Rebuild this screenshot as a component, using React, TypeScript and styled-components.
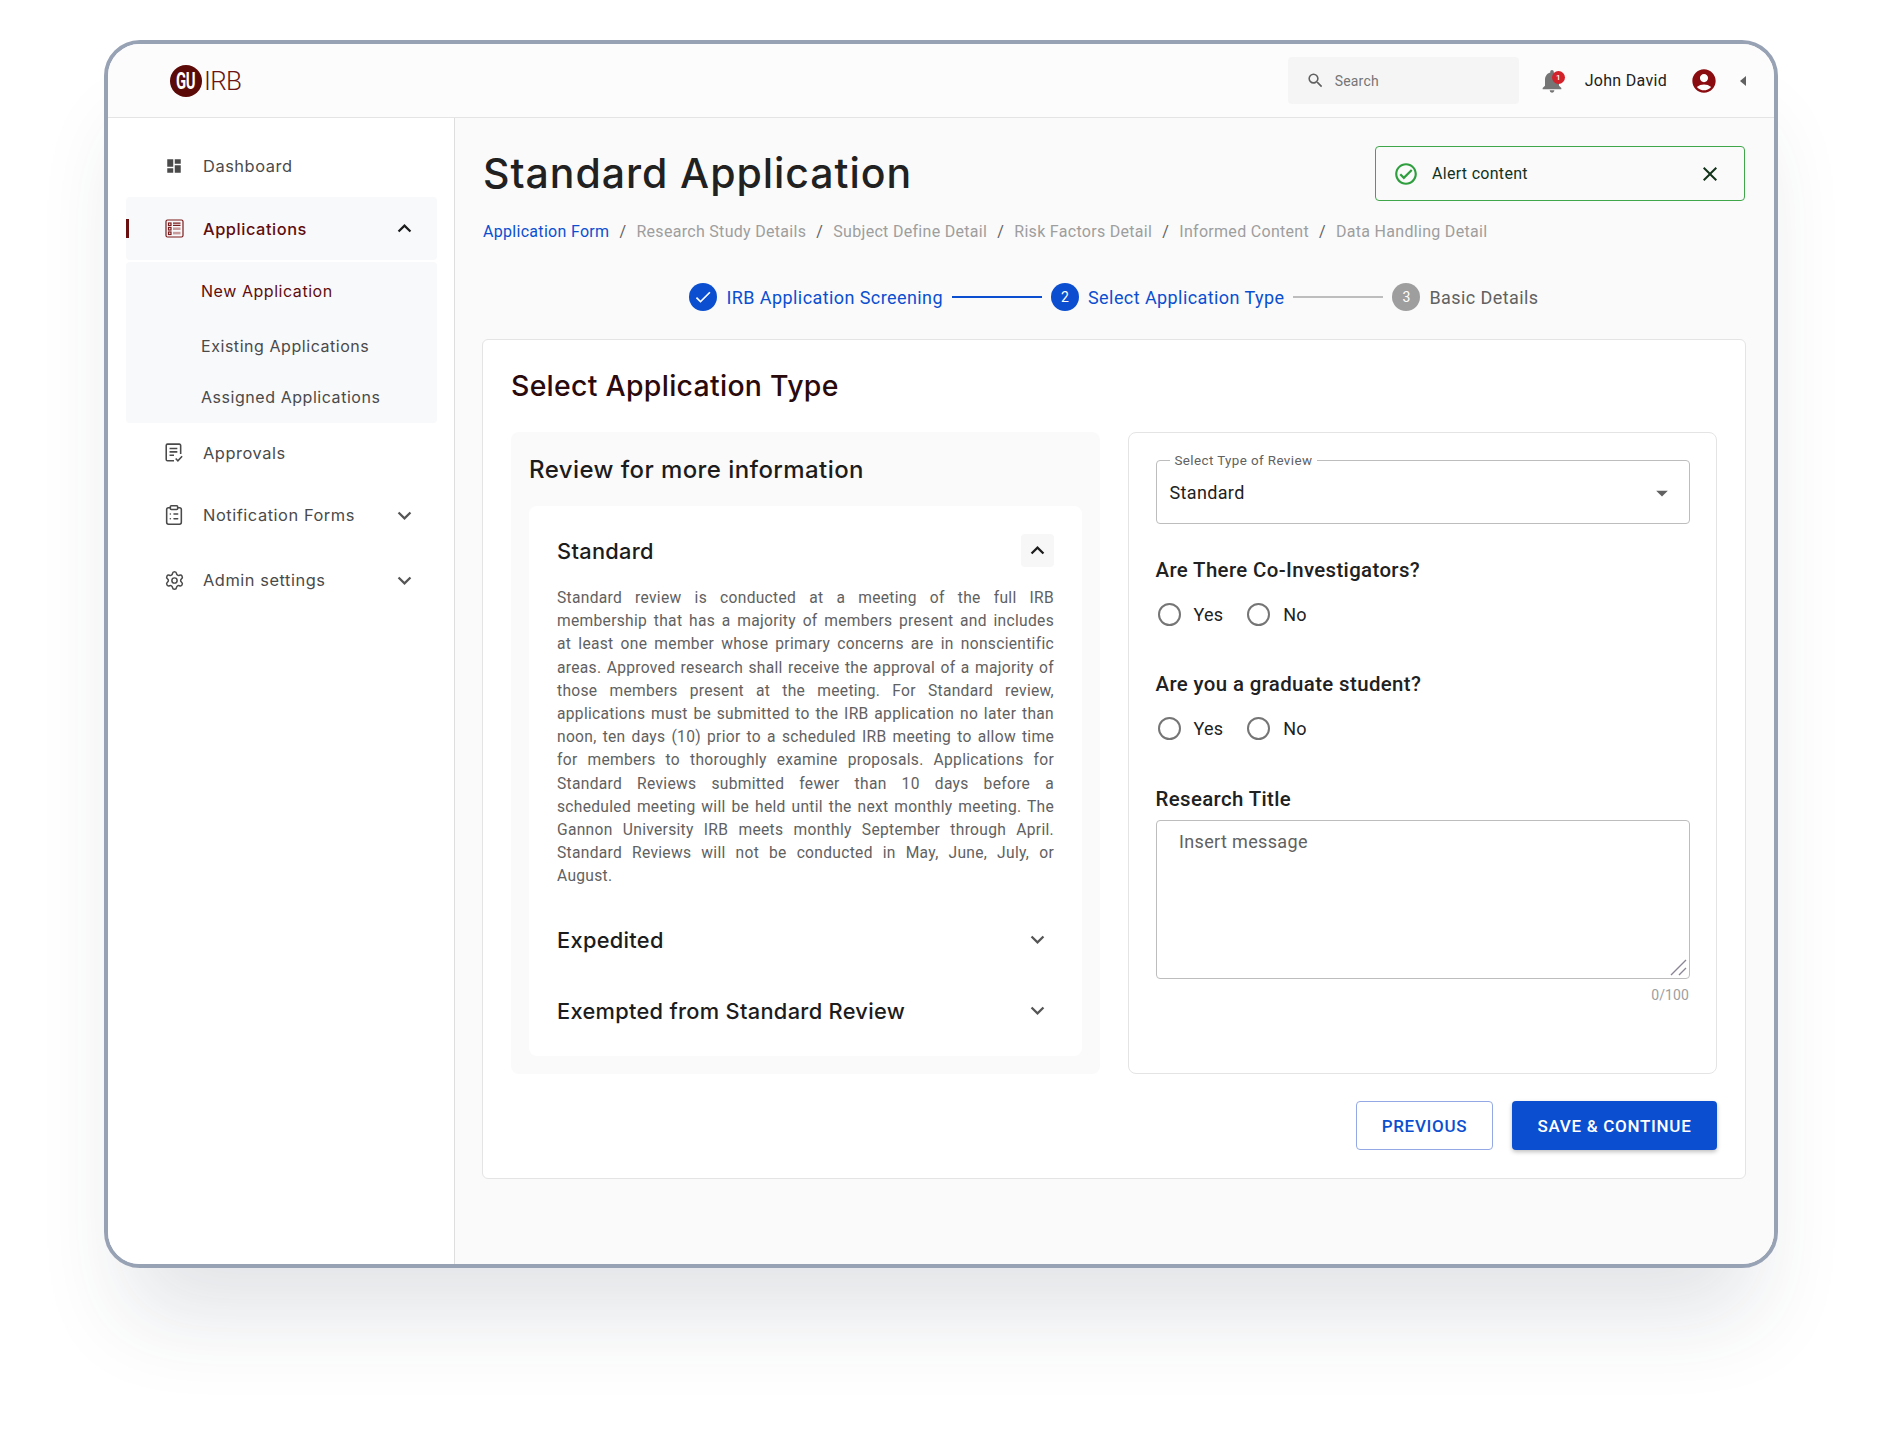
import React from 'react';
import styled, { createGlobalStyle } from 'styled-components';
import {
  MdAccountCircle,
  MdArrowDropDown,
  MdCheck,
  MdClose,
  MdDashboard,
  MdExpandLess,
  MdExpandMore,
  MdNotifications,
  MdOutlineCheckCircle,
  MdSearch,
} from 'react-icons/md';
import { ClipboardList, Settings } from 'lucide-react';

const MAROON = '#5f0d0d';
const BLUE = '#0b4fd0';
const HEADING_FONT = '"Inter", "Noto Sans", sans-serif';

const GlobalStyle = createGlobalStyle`
  html, body {
    margin: 0;
    background: #fff;
    font-family: "Roboto", "Liberation Sans", sans-serif;
    overflow: hidden;
  }
  * { box-sizing: border-box; }
`;

const Page = styled.div`
  height: 1436px;
  padding: 40px 0 0 104px;
`;

const Frame = styled.div`
  width: 1674px;
  height: 1228px;
  border: 4px solid #98a2b5;
  border-radius: 36px;
  background: #fff;
  box-shadow: 0 70px 90px -25px rgba(45, 55, 75, 0.14);
  overflow: hidden;
  display: flex;
  flex-direction: column;
`;

/* top bar */
const TopBar = styled.header`
  height: 74px;
  flex: none;
  background: #fcfcfc;
  border-bottom: 1.5px solid #e4e4e4;
  display: flex;
  align-items: center;
  padding: 0 28px 0 62px;
`;

const Logo = styled.div`
  display: flex;
  align-items: center;
`;

const LogoMark = styled.div`
  width: 32px;
  height: 32px;
  border-radius: 50%;
  background: #5c0a08;
  color: #fff;
  display: flex;
  align-items: center;
  justify-content: center;
  font-size: 24px;
  font-weight: 700;
  letter-spacing: -0.5px;

  & > span {
    display: block;
    transform: scaleX(0.62);
  }
`;

const LogoText = styled.span`
  margin-left: 2px;
  color: #6d1512;
  font-size: 26px;
  font-weight: 300;
  letter-spacing: -0.7px;
`;

const SearchBox = styled.div`
  margin-left: auto;
  width: 231px;
  height: 47px;
  background: #f5f5f5;
  border-radius: 4px;
  display: flex;
  align-items: center;
  gap: 10px;
  padding-left: 18px;
  font-size: 14px;
  letter-spacing: 0.2px;
  color: #757575;

  & > svg {
    color: #616161;
  }
`;

const Bell = styled.div`
  position: relative;
  margin-left: 19px;
  width: 28px;
  height: 28px;
  color: #757575;
  font-size: 28px;
  line-height: 0;
`;

const BellBadge = styled.span`
  position: absolute;
  top: 4px;
  left: 14px;
  width: 13px;
  height: 13px;
  border-radius: 50%;
  background: #d3222a;
  color: #fff;
  font-size: 8px;
  font-weight: 500;
  line-height: 13px;
  text-align: center;
`;

const UserName = styled.span`
  margin-left: 19px;
  font-size: 16px;
  letter-spacing: 0.3px;
  color: #212121;
`;

const Avatar = styled.div`
  margin-left: 23px;
  color: #8b0c10;
  font-size: 28px;
  line-height: 0;
`;

const CollapseArrow = styled.div`
  margin-left: 22px;
  width: 0;
  height: 0;
  border-top: 5px solid transparent;
  border-bottom: 5px solid transparent;
  border-right: 6px solid #616161;
`;

/* sidebar */
const Body = styled.div`
  flex: 1;
  display: flex;
  min-height: 0;
`;

const Sidebar = styled.nav`
  width: 347px;
  flex: none;
  background: #fff;
  border-right: 1px solid #dedede;
  padding: 17px 18px 0;
`;

const NavRow = styled.div<{ $active?: boolean; $h?: number; $top?: number }>`
  position: relative;
  height: ${({ $h }) => $h ?? 62}px;
  margin-top: ${({ $top }) => $top ?? 0}px;
  width: 311px;
  display: flex;
  align-items: center;
  padding: 0 19.5px 0 36px;
  border-radius: 4px;
  background: ${({ $active }) => ($active ? '#f8f9fb' : 'transparent')};
  color: ${({ $active }) => ($active ? MAROON : '#4a4a4a')};
`;

const ActiveMarker = styled.span`
  position: absolute;
  left: 0;
  top: 22px;
  width: 3px;
  height: 19px;
  background: #6a0f0f;
`;

const NavIcon = styled.span`
  width: 24px;
  height: 24px;
  display: flex;
  align-items: center;
  justify-content: center;
  flex: none;
`;

const NavLabel = styled.span<{ $strong?: boolean }>`
  margin-left: 17px;
  font-family: ${HEADING_FONT};
  font-size: 16.4px;
  font-weight: ${({ $strong }) => ($strong ? 500 : 400)};
  letter-spacing: 0.55px;
`;

const NavChevron = styled.span<{ $dark?: boolean }>`
  margin-left: auto;
  font-size: 27px;
  line-height: 0;
  color: ${({ $dark }) => ($dark ? '#1c1c1c' : '#555')};
`;

const SubPanel = styled.div`
  margin-top: 2px;
  width: 311px;
  height: 161px;
  border-radius: 4px;
  background: #f8f9fb;
  padding-left: 75px;
`;

const SubItem = styled.div<{ $active?: boolean; $h: number }>`
  height: ${({ $h }) => $h}px;
  display: flex;
  align-items: center;
  font-family: ${HEADING_FONT};
  font-size: 16px;
  letter-spacing: 0.55px;
  color: ${({ $active }) => ($active ? MAROON : '#4a4a4a')};
`;

/* main column */
const Main = styled.main`
  flex: 1;
  background: #fafafa;
  padding: 0 28px 0 27px;
`;

const TitleRow = styled.div`
  padding-top: 28px;
  display: flex;
  align-items: center;
  justify-content: space-between;
`;

const PageTitle = styled.h1`
  margin: 0;
  padding: 0 0 2px 1px;
  font-family: ${HEADING_FONT};
  font-size: 41px;
  font-weight: 500;
  letter-spacing: 0.95px;
  color: #212121;
`;

const Alert = styled.div`
  width: 370px;
  height: 55px;
  margin-right: 1px;
  border: 1.5px solid #3fa64a;
  border-radius: 4px;
  display: flex;
  align-items: center;
  padding: 0 22px 0 17px;
  color: #12331a;
  font-size: 16px;
  letter-spacing: 0.3px;
`;

const AlertIcon = styled.span`
  margin-right: 13px;
  font-size: 26px;
  line-height: 0;
  color: #2e9e3e;
`;

const AlertClose = styled.span`
  margin-left: auto;
  font-size: 24px;
  line-height: 0;
`;

const Breadcrumbs = styled.div`
  margin-top: 20px;
  height: 20px;
  padding-left: 1px;
  display: flex;
  align-items: center;
  font-size: 16px;
  letter-spacing: 0.3px;
  color: #9e9e9e;
`;

const Crumb = styled.span<{ $current?: boolean }>`
  color: ${({ $current }) => ($current ? BLUE : '#9e9e9e')};
`;

const CrumbSep = styled.span`
  width: 27px;
  text-align: center;
  color: #616161;
`;

const Stepper = styled.div`
  margin-top: 42px;
  height: 28px;
  display: flex;
  align-items: center;
  justify-content: center;
`;

const StepDot = styled.span<{ $done?: boolean }>`
  width: 28px;
  height: 28px;
  border-radius: 50%;
  flex: none;
  background: ${({ $done }) => ($done ? BLUE : '#9e9e9e')};
  color: #fff;
  display: flex;
  align-items: center;
  justify-content: center;
  font-size: 14px;
`;

const StepText = styled.span<{ $done?: boolean }>`
  margin-left: 9px;
  font-size: 18px;
  letter-spacing: 0.42px;
  color: ${({ $done }) => ($done ? BLUE : '#616161')};
`;

const StepLine = styled.span<{ $done?: boolean }>`
  width: 90px;
  height: 1.5px;
  margin: 0 9px;
  background: ${({ $done }) => ($done ? BLUE : '#bdbdbd')};
`;

const Card = styled.section`
  margin-top: 28px;
  height: 840px;
  background: #fff;
  border: 1.5px solid #e4e4e4;
  border-radius: 6px;
  padding: 26px 28px 0;
`;

const CardTitle = styled.h2`
  margin: 0;
  height: 40px;
  line-height: 40px;
  font-family: ${HEADING_FONT};
  font-size: 28.4px;
  font-weight: 500;
  letter-spacing: 0.3px;
  color: #2a0a0a;
`;

const Columns = styled.div`
  margin-top: 26px;
  display: grid;
  grid-template-columns: 589px 589px;
  gap: 28px;
`;

/* accordion column */
const InfoPanel = styled.div`
  height: 642px;
  background: #fafafa;
  border-radius: 8px;
  padding: 20px 18px 18px;
`;

const InfoTitle = styled.h3`
  margin: 0 0 18px;
  height: 36px;
  line-height: 36px;
  font-family: ${HEADING_FONT};
  font-size: 24px;
  font-weight: 500;
  letter-spacing: 0.42px;
  color: #1c1c1c;
`;

const Accordion = styled.div`
  height: 550px;
  background: #fff;
  border-radius: 8px;
  padding: 28px 28px 0;
`;

const AccordionHead = styled.div<{ $top?: number; $h?: number }>`
  height: ${({ $h }) => $h ?? 40}px;
  margin-top: ${({ $top }) => $top ?? 0}px;
  display: flex;
  align-items: center;
  justify-content: space-between;
  font-family: ${HEADING_FONT};
  font-size: 21.8px;
  font-weight: 500;
  letter-spacing: 0.3px;
  color: #1c1c1c;
`;

const ChevronBox = styled.span<{ $filled?: boolean }>`
  width: 33px;
  height: 33px;
  border-radius: 4px;
  background: ${({ $filled }) => ($filled ? '#f7f7f7' : 'transparent')};
  color: ${({ $filled }) => ($filled ? '#1c1c1c' : '#555')};
  display: flex;
  align-items: center;
  justify-content: center;
  font-size: 27px;
`;

const Paragraph = styled.div`
  margin-top: 20px;
  font-size: 15.6px;
  line-height: 23.2px;
  letter-spacing: 0.3px;
  color: #616161;
`;

const ParagraphLine = styled.div<{ $last?: boolean }>`
  white-space: nowrap;
  text-align: justify;
  text-align-last: ${({ $last }) => ($last ? 'left' : 'justify')};
`;

/* form column */
const FormPanel = styled.div`
  height: 642px;
  background: #fff;
  border: 1.5px solid #e4e4e4;
  border-radius: 8px;
  padding: 27px 26px 0 26.5px;
`;

const SelectBox = styled.div`
  position: relative;
  height: 64px;
  border: 1.5px solid #bdbdbd;
  border-radius: 4px;
  display: flex;
  align-items: center;
  justify-content: space-between;
  padding: 1px 13px 0 13px;
  font-size: 18px;
  letter-spacing: 0.35px;
  color: #212121;
`;

const SelectLegend = styled.span`
  position: absolute;
  top: -8px;
  left: 13px;
  padding: 0 5px;
  background: #fff;
  font-size: 13.4px;
  line-height: 16px;
  letter-spacing: 0.4px;
  color: #616161;
`;

const SelectArrow = styled.span`
  font-size: 28px;
  line-height: 0;
  color: #616161;
`;

const Question = styled.div<{ $top: number }>`
  margin-top: ${({ $top }) => $top}px;
  height: 24px;
  line-height: 24px;
  font-size: 20.4px;
  font-weight: 500;
  letter-spacing: 0.38px;
  color: #212121;
`;

const RadioRow = styled.div`
  margin-top: 20px;
  height: 24px;
  padding-left: 2px;
  display: flex;
  align-items: center;
  gap: 24px;
`;

const RadioOption = styled.label`
  display: flex;
  align-items: center;
  gap: 13px;
  font-size: 18px;
  letter-spacing: 0.2px;
  color: #212121;
`;

const RadioCircle = styled.span`
  width: 23px;
  height: 23px;
  border-radius: 50%;
  border: 2px solid #757575;
`;

const FieldWrap = styled.div`
  position: relative;
  margin-top: 9px;
`;

const TitleField = styled.textarea`
  display: block;
  width: 100%;
  height: 159px;
  padding: 9px 22.5px;
  border: 1.5px solid #bdbdbd;
  border-radius: 4px;
  background: #fff;
  outline: none;
  resize: none;
  font-family: inherit;
  font-size: 18px;
  line-height: 24px;
  letter-spacing: 0.35px;

  &::placeholder {
    color: #616161;
    opacity: 1;
  }
`;

const ResizeGrip = styled.svg`
  position: absolute;
  right: 3px;
  bottom: 3px;
  width: 17px;
  height: 17px;
`;

const Counter = styled.div`
  margin-top: 8px;
  padding-right: 1px;
  height: 16px;
  line-height: 16px;
  text-align: right;
  font-size: 14px;
  letter-spacing: 0.1px;
  color: #9e9e9e;
`;

const Actions = styled.div`
  margin-top: 27px;
  display: flex;
  justify-content: flex-end;
  gap: 19px;
`;

const Button = styled.button<{ $primary?: boolean }>`
  height: 49px;
  padding: 0;
  width: ${({ $primary }) => ($primary ? 205 : 137)}px;
  border-radius: 4px;
  border: ${({ $primary }) => ($primary ? 'none' : '1.5px solid #94a8e6')};
  background: ${({ $primary }) => ($primary ? BLUE : '#fff')};
  color: ${({ $primary }) => ($primary ? '#fff' : BLUE)};
  box-shadow: ${({ $primary }) => ($primary ? '0 2px 4px rgba(0, 0, 0, 0.25)' : 'none')};
  font-family: inherit;
  font-size: 17px;
  font-weight: 500;
  letter-spacing: 0.7px;
`;

function ApplicationsIcon() {
  return (
    <svg width="19" height="19" viewBox="0 0 19 19" fill="none" stroke="#7a1a1a" strokeWidth="1.2">
      <rect x="1" y="1" width="17" height="17" rx="1.5" />
      <rect x="3.5" y="4" width="2.5" height="2.5" />
      <path d="M8 4.2h7.5M8 6.4h7.5" />
      <rect x="3.5" y="8.5" width="2.5" height="2.5" />
      <rect x="8" y="8.4" width="7.5" height="2.6" fill="#c79b9b" stroke="none" />
      <rect x="3.5" y="13" width="2.5" height="2.5" />
      <rect x="8" y="12.8" width="7.5" height="2.6" fill="#c79b9b" stroke="none" />
    </svg>
  );
}

function ApprovalsIcon() {
  return (
    <svg width="20" height="20" viewBox="0 0 18 18" fill="none" stroke="#4a4a4a" strokeWidth="1.4">
      <path d="M9 16H3.2A1.2 1.2 0 0 1 2 14.8V2.2A1.2 1.2 0 0 1 3.2 1h10.6A1.2 1.2 0 0 1 15 2.2V10" />
      <path d="M5 5h7M5 8h7M5 11h4" />
      <path d="M10.5 14l2 2 3.8-4" />
    </svg>
  );
}

const paragraphLines = [
  'Standard review is conducted at a meeting of the full IRB',
  'membership that has a majority of members present and includes',
  'at least one member whose primary concerns are in nonscientific',
  'areas. Approved research shall receive the approval of a majority of',
  'those members present at the meeting. For Standard review,',
  'applications must be submitted to the IRB application no later than',
  'noon, ten days (10) prior to a scheduled IRB meeting to allow time',
  'for members to thoroughly examine proposals. Applications for',
  'Standard Reviews submitted fewer than 10 days before a',
  'scheduled meeting will be held until the next monthly meeting. The',
  'Gannon University IRB meets monthly September through April.',
  'Standard Reviews will not be conducted in May, June, July, or',
  'August.',
];

const crumbs = [
  'Research Study Details',
  'Subject Define Detail',
  'Risk Factors Detail',
  'Informed Content',
  'Data Handling Detail',
];

function YesNo() {
  return (
    <RadioRow>
      <RadioOption>
        <RadioCircle />
        Yes
      </RadioOption>
      <RadioOption>
        <RadioCircle />
        No
      </RadioOption>
    </RadioRow>
  );
}

export default function App() {
  return (
    <Page>
      <GlobalStyle />
      <Frame>
        <TopBar>
          <Logo>
            <LogoMark>
              <span>GU</span>
            </LogoMark>
            <LogoText>IRB</LogoText>
          </Logo>
          <SearchBox>
            <MdSearch size={19} />
            Search
          </SearchBox>
          <Bell>
            <MdNotifications />
            <BellBadge>1</BellBadge>
          </Bell>
          <UserName>John David</UserName>
          <Avatar>
            <MdAccountCircle />
          </Avatar>
          <CollapseArrow />
        </TopBar>

        <Body>
          <Sidebar>
            <NavRow>
              <NavIcon>
                <MdDashboard size={18} />
              </NavIcon>
              <NavLabel>Dashboard</NavLabel>
            </NavRow>
            <NavRow $active $h={63}>
              <ActiveMarker />
              <NavIcon>
                <ApplicationsIcon />
              </NavIcon>
              <NavLabel $strong>Applications</NavLabel>
              <NavChevron $dark>
                <MdExpandLess />
              </NavChevron>
            </NavRow>
            <SubPanel>
              <SubItem $active $h={57}>
                New Application
              </SubItem>
              <SubItem $h={53}>Existing Applications</SubItem>
              <SubItem $h={50}>Assigned Applications</SubItem>
            </SubPanel>
            <NavRow $h={60}>
              <NavIcon>
                <ApprovalsIcon />
              </NavIcon>
              <NavLabel>Approvals</NavLabel>
            </NavRow>
            <NavRow $top={1}>
              <NavIcon>
                <ClipboardList size={22} strokeWidth={1.7} />
              </NavIcon>
              <NavLabel>Notification Forms</NavLabel>
              <NavChevron>
                <MdExpandMore />
              </NavChevron>
            </NavRow>
            <NavRow $top={3}>
              <NavIcon>
                <Settings size={21} strokeWidth={1.7} />
              </NavIcon>
              <NavLabel>Admin settings</NavLabel>
              <NavChevron>
                <MdExpandMore />
              </NavChevron>
            </NavRow>
          </Sidebar>

          <Main>
            <TitleRow>
              <PageTitle>Standard Application</PageTitle>
              <Alert>
                <AlertIcon>
                  <MdOutlineCheckCircle />
                </AlertIcon>
                Alert content
                <AlertClose>
                  <MdClose />
                </AlertClose>
              </Alert>
            </TitleRow>

            <Breadcrumbs>
              <Crumb $current>Application Form</Crumb>
              {crumbs.map((crumb) => (
                <React.Fragment key={crumb}>
                  <CrumbSep>/</CrumbSep>
                  <Crumb>{crumb}</Crumb>
                </React.Fragment>
              ))}
            </Breadcrumbs>

            <Stepper>
              <StepDot $done>
                <MdCheck size={20} />
              </StepDot>
              <StepText $done>IRB Application Screening</StepText>
              <StepLine $done />
              <StepDot $done>2</StepDot>
              <StepText $done>Select Application Type</StepText>
              <StepLine />
              <StepDot>3</StepDot>
              <StepText>Basic Details</StepText>
            </Stepper>

            <Card>
              <CardTitle>Select Application Type</CardTitle>
              <Columns>
                <InfoPanel>
                  <InfoTitle>Review for more information</InfoTitle>
                  <Accordion>
                    <AccordionHead $h={33}>
                      Standard
                      <ChevronBox $filled>
                        <MdExpandLess />
                      </ChevronBox>
                    </AccordionHead>
                    <Paragraph>
                      {paragraphLines.map((line, i) => (
                        <ParagraphLine key={line} $last={i === paragraphLines.length - 1}>
                          {line}
                        </ParagraphLine>
                      ))}
                    </Paragraph>
                    <AccordionHead $top={31}>
                      Expedited
                      <ChevronBox>
                        <MdExpandMore />
                      </ChevronBox>
                    </AccordionHead>
                    <AccordionHead $top={31}>
                      Exempted from Standard Review
                      <ChevronBox>
                        <MdExpandMore />
                      </ChevronBox>
                    </AccordionHead>
                  </Accordion>
                </InfoPanel>

                <FormPanel>
                  <SelectBox>
                    <SelectLegend>Select Type of Review</SelectLegend>
                    Standard
                    <SelectArrow>
                      <MdArrowDropDown />
                    </SelectArrow>
                  </SelectBox>
                  <Question $top={34}>Are There Co-Investigators?</Question>
                  <YesNo />
                  <Question $top={46}>Are you a graduate student?</Question>
                  <YesNo />
                  <Question $top={47}>Research Title</Question>
                  <FieldWrap>
                    <TitleField placeholder="Insert message" />
                    <ResizeGrip viewBox="0 0 17 17" fill="none" stroke="#8a8494" strokeWidth="1.4">
                      <path d="M1 16L16 1M9 16l7-7" />
                    </ResizeGrip>
                  </FieldWrap>
                  <Counter>0/100</Counter>
                </FormPanel>
              </Columns>
              <Actions>
                <Button>PREVIOUS</Button>
                <Button $primary>SAVE &amp; CONTINUE</Button>
              </Actions>
            </Card>
          </Main>
        </Body>
      </Frame>
    </Page>
  );
}
